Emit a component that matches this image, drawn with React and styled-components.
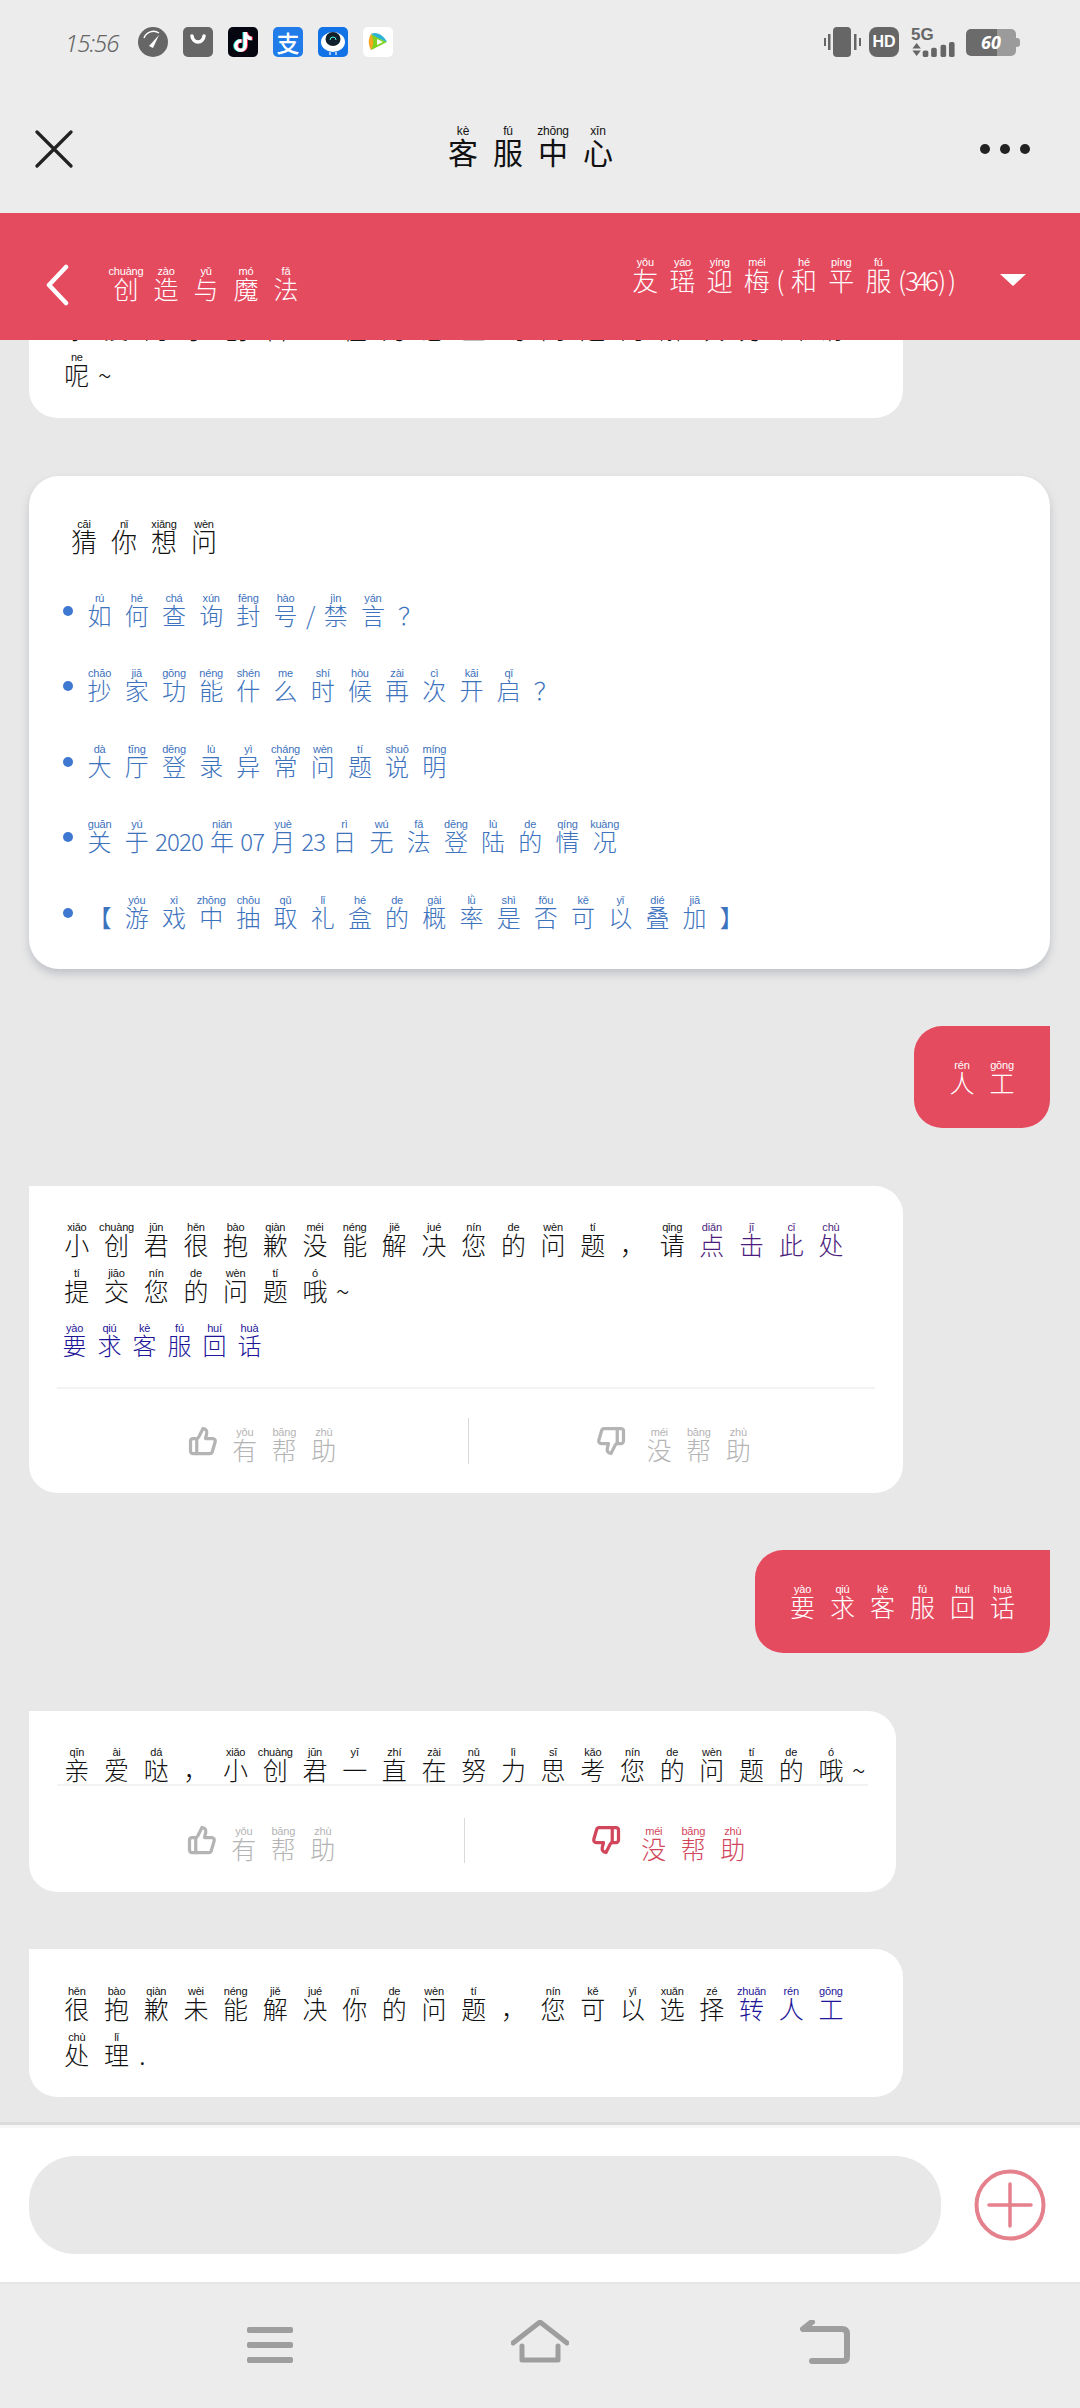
import React from 'react';
import styled, { createGlobalStyle } from 'styled-components';
import { FaTiktok } from 'react-icons/fa6';
import { ThumbsUp, ThumbsDown } from 'lucide-react';

const Global = createGlobalStyle`
  html, body { margin: 0; padding: 0; background: #e8e8e8; }
  * { box-sizing: border-box; }
  body { font-family: "Noto Sans CJK SC", "Noto Sans", sans-serif; }
`;

const RED = '#e54b5f';

const Page = styled.div`
  width: 1080px; height: 2408px; display: flex; flex-direction: column; overflow: hidden;
  background: #e8e8e8; color: #222;
`;
const Top = styled.header`background: #ececec; height: 213px; flex: none; display: flex; flex-direction: column;`;
const StatusBar = styled.div`
  height: 84px; display: flex; align-items: center; padding: 0 64px 0 65px; color: #666;
`;
const Time = styled.span`
  width: 73px; font: italic 300 24px "Noto Sans", sans-serif; letter-spacing: -1px; color: #666;
`;
const AppIcons = styled.div`display: flex; gap: 15px; flex: 1;`;
const Tile = styled.div`
  width: 30px; height: 30px; border-radius: 5px; background: ${p => p.$bg};
  display: flex; align-items: center; justify-content: center; color: #fff; overflow: hidden;
`;
const TikTok = styled(FaTiktok)`
  width: 18px; height: 20px; color: #fff;
  filter: drop-shadow(1px 0 0 #fe2c55) drop-shadow(-1px 0 0 #25f4ee);
`;
const AlipayChar = styled.span`font: 500 23px/30px "Noto Sans CJK SC", sans-serif; color: #fff;`;
const SysIcons = styled.div`display: flex; align-items: center;`;
const HdBadge = styled.div`
  width: 30px; height: 30px; border-radius: 8px; background: #666; color: #fff; margin: 0 12px 0 8px;
  font: 700 16px/30px "Liberation Sans", sans-serif; text-align: center;
`;
const NetBlock = styled.div`width: 45px; height: 30px; display: flex; flex-direction: column; margin-right: 10px;`;
const FiveG = styled.span`font: 700 17px/15px "Liberation Sans", sans-serif; color: #666;`;
const Battery = styled.div`
  position: relative; width: 50px; height: 27px; border-radius: 5px;
  background: linear-gradient(90deg, #6b6b6b 0 62%, #9b9b9b 62% 100%);
  font: italic 700 18px/27px "Noto Sans", sans-serif; color: #fff; text-align: center;
  &::after { content: ''; position: absolute; right: -4px; top: 9px; width: 4px; height: 9px; border-radius: 0 3px 3px 0; background: #9b9b9b; }
`;
const TitleBar = styled.div`flex: 1; display: flex; align-items: center; justify-content: space-between; padding: 0 50px 0 35px;`;
const TitleSlot = styled.div`width: 50px; display: flex; justify-content: ${p => p.$end ? 'flex-end' : 'flex-start'};`;
const TitleText = styled.h1`margin: 0 4px 0 0; font-weight: 400; color: #111;`;
const Dots = styled.div`
  display: flex; gap: 10px;
  span { width: 10px; height: 10px; border-radius: 50%; background: #222; }
`;
const RedBar = styled.div`
  height: 127px; flex: none; background: ${RED}; color: #fff; display: flex; align-items: center;
  justify-content: space-between; padding: 0 54px 0 45px;
`;
const RedLeft = styled.div`display: flex; align-items: center; gap: 37px; padding-top: 17px;`;
const RedRight = styled.div`display: flex; align-items: center; gap: 43px; padding-bottom: 2px;`;
const Caret = styled.div`
  width: 0; height: 0; border-left: 13px solid transparent; border-right: 13px solid transparent;
  border-top: 12px solid #fff; margin-top: 8px;
`;

const Messages = styled.main`
  flex: 1; min-height: 0; overflow: hidden; display: flex; flex-direction: column; padding: 0 30px 0 29px;
`;
const Bubble = styled.div`
  flex: none; width: ${p => p.$w || 874}px; margin-top: ${p => p.$mt}px; background: #fff;
  border-radius: ${p => p.$first ? '28px' : '0 28px 28px 28px'};
  padding: ${p => p.$pt}px 28px ${p => p.$pb}px;
`;
const Body = styled.div`color: #111;`;
const LinkLine = styled.div`margin-top: 9px; color: #1d1699;`;
const Purple = styled.span`color: #4c1d7d;`;
const Navy = styled.span`color: #1d1699;`;
const HRule = styled.div`height: 2px; background: #f3f3f3; margin-top: ${p => p.$mt}px;`;
const Feedback = styled.div`display: flex; align-items: center; height: ${p => p.$h}px; padding-top: ${p => p.$pt}px; padding-bottom: 29px;`;
const FbButton = styled.div`
  flex: 1; display: flex; align-items: center; gap: ${p => p.$gap}px; padding-left: ${p => p.$pl}px;
  color: ${p => p.$active ? '#d2465c' : '#b4b4b4'};
`;
const FbLabel = styled.span`margin-top: 6px;`;
const FbSep = styled.div`width: 1px; height: ${p => p.$h}px; background: #d9d9d9; flex: none;`;

const Card = styled.section`
  flex: none; width: 1021px; margin-top: 58px; background: #fff; border-radius: 30px;
  padding: 43px 35px 40px; box-shadow: 0 5px 8px rgba(120, 125, 140, .35);
`;
const CardHead = styled.div`color: #111;`;
const QList = styled.ul`list-style: none; margin: 36px 0 0; padding: 0; display: flex; flex-direction: column; gap: 41.4px;`;
const QItem = styled.li`display: flex; align-items: flex-start; gap: 8px; height: 34px; margin-left: -1px; color: #3d72bd;`;
const QDot = styled.span`width: 10px; height: 10px; flex: none; border-radius: 50%; background: #3f78d0; margin-top: 13px;`;

const Mine = styled.div`
  flex: none; align-self: flex-end; display: flex; align-items: center; justify-content: center;
  width: ${p => p.$w}px; height: ${p => p.$h}px; margin-top: ${p => p.$mt}px; background: ${RED}; color: #fff;
  border-radius: 28px 0 28px 28px; padding-top: 4px;
`;

const Composer = styled.div`
  height: 157px; flex: none; background: #fff; border-top: 3px solid #f7f7f7; display: flex; align-items: center;
  padding: 0 34px 0 29px; justify-content: space-between; box-shadow: 0 -3px 0 #dcdcdc;
`;
const Input = styled.div`width: 912px; height: 98px; border-radius: 46px; background: #e8e8e8;`;
const Nav = styled.nav`
  height: 126px; flex: none; background: #ececec; border-top: 2px solid #e6e6e6; display: flex; align-items: flex-start;
  padding: 36px 0 0 247px; color: #9e9e9e;
`;
const NavIcon = styled.svg`margin-right: ${p => p.$mr || 0}px; flex: none;`;

/* pinyin run */
const CellBox = styled.span`
  display: inline-flex; flex-direction: column; align-items: center; vertical-align: top;
  width: ${p => p.$w}px; height: ${p => p.$h}px;
`;
const Pin = styled.span`
  height: ${p => p.$rt}px; font: 400 ${p => p.$ps}px/${p => p.$rt}px "Liberation Sans", sans-serif;
  letter-spacing: -0.2px; white-space: nowrap;
`;
const Han = styled.span`
  font-family: "Noto Sans CJK SC", sans-serif; font-size: ${p => p.$size}px; line-height: ${p => p.$lh}px;
  font-weight: ${p => p.$fw}; white-space: nowrap;
`;

function Py({ text, py = '', size = 25, adv = 39.7, rt = 10, lh = 24, pitch = 46, ps = 11, fw = 300, narrow = 12 }) {
  const tones = py.split(' ').filter(Boolean);
  let k = 0;
  const cells = Array.from(text).map((c, i) => {
    const isHan = /\p{Script=Han}/u.test(c);
    const isWide = /[，？【】]/.test(c);
    let w = adv;
    if (!isHan && !isWide) w = c === '~' ? 16 : narrow;
    const pin = isHan ? (tones[k++] || '') : '';
    return (
      <CellBox key={i} $w={w} $h={pitch}>
        <Pin $rt={rt} $ps={ps}>{pin}</Pin>
        <Han $size={size} $lh={lh} $fw={fw}>{c}</Han>
      </CellBox>
    );
  });
  return <>{cells}</>;
}

const Gauge = () => (
  <svg width="30" height="30" viewBox="0 0 30 30">
    <circle cx="15" cy="15" r="15" fill="#666" />
    <path d="M6 11a10 10 0 0 1 15-5" stroke="#fff" strokeWidth="1.4" fill="none" />
    <path d="M11 19 L21 8 L15 21 Z" fill="#fff" />
  </svg>
);
const Bag = () => (
  <Tile $bg="#666">
    <svg width="30" height="30" viewBox="0 0 30 30"><path d="M9 9c1 8 11 8 12 0" stroke="#fff" strokeWidth="3.5" fill="none" strokeLinecap="round" /></svg>
  </Tile>
);
const Bot = () => (
  <Tile $bg="#1273e6">
    <svg width="30" height="30" viewBox="0 0 30 30">
      <ellipse cx="15" cy="15" rx="12" ry="10" fill="#fff" />
      <ellipse cx="15" cy="12" rx="7.5" ry="7" fill="#10202c" />
      <path d="M12 13a3 3 0 0 1 6 0" stroke="#5fd" strokeWidth="1" fill="none" />
      <path d="M12 25v3M18 25v3" stroke="#cfe6ff" strokeWidth="1.5" />
    </svg>
  </Tile>
);
const Play = () => (
  <Tile $bg="#fff">
    <svg width="30" height="30" viewBox="0 0 30 30">
      <path d="M8 7 C5 12 5 18 8 23 L15 19 V11 Z" fill="#f5a623" />
      <path d="M8 7 L24 15 L8 23 C11 18 11 12 8 7 Z" fill="#7ed321" />
      <path d="M8 7 C14 4 21 9 24 15 L15 11 Z" fill="#2bb3d6" />
      <path d="M14 12 L20 15 L14 18 Z" fill="#fff" />
    </svg>
  </Tile>
);
const Vibrate = () => (
  <svg width="37" height="30" viewBox="0 0 37 30" fill="#666">
    <rect x="9" y="0" width="18" height="30" rx="4" />
    <rect x="0" y="11" width="2" height="8" />
    <rect x="4" y="7" width="2.5" height="16" />
    <rect x="30" y="7" width="2.5" height="16" />
    <rect x="35" y="11" width="2" height="8" />
  </svg>
);
const Signal = () => (
  <svg width="45" height="16" viewBox="0 0 45 16" fill="#666">
    <path d="M0 7 L4.5 1 L9 7 Z M0 9 L9 9 L4.5 15 Z" />
    <rect x="11" y="9" width="6" height="7" rx="2" />
    <rect x="20" y="6" width="6" height="10" rx="2" />
    <rect x="30" y="3" width="6" height="13" rx="2" />
    <rect x="39" y="0" width="6" height="16" rx="2" />
  </svg>
);

const thumbProps = { size: 30, strokeWidth: 2.6 };

function FeedbackRow({ sep, pt, upPl, downPl, downGap, downActive }) {
  return (
    <Feedback $pt={pt} $h={pt + sep + 29}>
      <FbButton $pl={upPl} $gap={7}>
        <ThumbsUp {...thumbProps} />
        <FbLabel><Py text="有帮助" py="yǒu bāng zhù" adv={39.5} pitch={34} /></FbLabel>
      </FbButton>
      <FbSep $h={sep} />
      <FbButton $pl={downPl} $gap={downGap} $active={downActive}>
        <ThumbsDown {...thumbProps} />
        <FbLabel><Py text="没帮助" py="méi bāng zhù" adv={39.5} pitch={34} /></FbLabel>
      </FbButton>
    </Feedback>
  );
}

export default function App() {
  const q = { size: 24, adv: 37.2, pitch: 34 };
  return (
    <Page>
      <Global />
      <Top>
        <StatusBar>
          <Time>15:56</Time>
          <AppIcons>
            <Gauge />
            <Bag />
            <Tile $bg="#05060f"><TikTok /></Tile>
            <Tile $bg="#1f7ce8"><AlipayChar>支</AlipayChar></Tile>
            <Bot />
            <Play />
          </AppIcons>
          <SysIcons>
            <Vibrate />
            <HdBadge>HD</HdBadge>
            <NetBlock>
              <FiveG>5G</FiveG>
              <Signal />
            </NetBlock>
            <Battery>60</Battery>
          </SysIcons>
        </StatusBar>
        <TitleBar>
          <TitleSlot>
            <svg width="38" height="38" viewBox="0 0 38 38"><path d="M2 2 L36 36 M36 2 L2 36" stroke="#222" strokeWidth="3.2" strokeLinecap="round" /></svg>
          </TitleSlot>
          <TitleText>
            <Py text="客服中心" py="kè fú zhōng xīn" size={30} adv={45} lh={30} pitch={46} ps={12} fw={400} />
          </TitleText>
          <TitleSlot $end><Dots><span /><span /><span /></Dots></TitleSlot>
        </TitleBar>
      </Top>
      <RedBar>
        <RedLeft>
          <svg width="24" height="42" viewBox="0 0 24 42"><path d="M21 3 L4 21 L21 39" stroke="#fff" strokeWidth="4.5" fill="none" strokeLinecap="round" strokeLinejoin="round" /></svg>
          <span><Py text="创造与魔法" py="chuàng zào yǔ mó fǎ" adv={40} pitch={38} /></span>
        </RedLeft>
        <RedRight>
          <span><Py text="友瑶迎梅(和平服(346))" py="yǒu yáo yíng méi hé píng fú" size={26} adv={37.2} rt={8} lh={28} pitch={36} narrow={10} /></span>
          <Caret />
        </RedRight>
      </RedBar>
      <Messages>
        <Bubble $first $mt={-70} $pt={36} $pb={20}>
          <Body>
            <Py text="亲爱的小创君正在为您查询问题的解决方法请" />
            <Py text="呢~" py="ne" />
          </Body>
        </Bubble>
        <Card>
          <CardHead>
            <Py text="猜你想问" py="cāi nǐ xiǎng wèn" size={26} adv={40} pitch={38} />
          </CardHead>
          <QList>
            <QItem><QDot /><span><Py text="如何查询封号/禁言？" py="rú hé chá xún fēng hào jìn yán" {...q} narrow={13} /></span></QItem>
            <QItem><QDot /><span><Py text="抄家功能什么时候再次开启？" py="chāo jiā gōng néng shén me shí hòu zài cì kāi qǐ" {...q} /></span></QItem>
            <QItem><QDot /><span><Py text="大厅登录异常问题说明" py="dà tīng dēng lù yì cháng wèn tí shuō míng" {...q} /></span></QItem>
            <QItem><QDot /><span><Py text="关于2020年07月23日无法登陆的情况" py="guān yú nián yuè rì wú fǎ dēng lù de qíng kuàng" {...q} /></span></QItem>
            <QItem><QDot /><span><Py text="【游戏中抽取礼盒的概率是否可以叠加】" py="yóu xì zhōng chōu qǔ lǐ hé de gài lǜ shì fǒu kě yǐ dié jiā" {...q} /></span></QItem>
          </QList>
        </Card>
        <Mine $w={136} $h={102} $mt={57}>
          <Py text="人工" py="rén gōng" adv={40} pitch={38} />
        </Mine>
        <Bubble $mt={58} $pt={36} $pb={0}>
          <Body>
            <Py text="小创君很抱歉没能解决您的问题，请" py="xiǎo chuàng jūn hěn bào qiàn méi néng jiě jué nín de wèn tí qǐng" />
            <Purple><Py text="点击此处" py="diǎn jī cǐ chù" /></Purple>
            <Py text="提交您的问题哦~" py="tí jiāo nín de wèn tí ó" />
          </Body>
          <LinkLine><Py text="要求客服回话" py="yào qiú kè fú huí huà" size={24} adv={35} pitch={36} /></LinkLine>
          <HRule $mt={28} />
          <FeedbackRow sep={46} pt={29} upPl={131} downPl={127} downGap={14} />
        </Bubble>
        <Mine $w={295} $h={103} $mt={57}>
          <Py text="要求客服回话" py="yào qiú kè fú huí huà" adv={40} pitch={38} />
        </Mine>
        <Bubble $w={867} $mt={58} $pt={36} $pb={0}>
          <Body>
            <Py text="亲爱哒，小创君一直在努力思考您的问题的哦~" py="qīn ài dá xiǎo chuàng jūn yī zhí zài nǔ lì sī kǎo nín de wèn tí de ó" pitch={37} />
          </Body>
          <HRule $mt={0} />
          <FeedbackRow sep={45} pt={32} upPl={130} downPl={126} downGap={13} downActive />
        </Bubble>
        <Bubble $mt={57} $pt={37} $pb={19}>
          <Body>
            <Py text="很抱歉未能解决你的问题，您可以选择" py="hěn bào qiàn wèi néng jiě jué nǐ de wèn tí nín kě yǐ xuǎn zé" />
            <Navy><Py text="转人工" py="zhuǎn rén gōng" /></Navy>
            <Py text="处理." py="chù lǐ" />
          </Body>
        </Bubble>
      </Messages>
      <Composer>
        <Input />
        <svg width="72" height="72" viewBox="0 0 72 72" fill="none" stroke="#e5808d">
          <circle cx="36" cy="36" r="33.5" strokeWidth="4" />
          <path d="M15 36H57M36 15V57" strokeWidth="3.5" strokeLinecap="round" />
        </svg>
      </Composer>
      <Nav>
        <NavIcon $mr={218} width="46" height="44" viewBox="0 0 46 44" fill="currentColor">
          <rect y="7" width="46" height="6" rx="2" />
          <rect y="22" width="46" height="6" rx="2" />
          <rect y="37" width="46" height="6" rx="2" />
        </NavIcon>
        <NavIcon $mr={231} width="58" height="44" viewBox="0 0 58 44" fill="none" stroke="currentColor" strokeWidth="5" strokeLinecap="round" strokeLinejoin="round">
          <path d="M2 23 L29 2 L56 23" />
          <path d="M11 26V40H47V26" />
        </NavIcon>
        <NavIcon width="50" height="44" viewBox="0 0 50 44" fill="none" stroke="currentColor" strokeWidth="6" strokeLinecap="round" strokeLinejoin="round">
          <path d="M4 9 H42 Q47 9 47 14 V37 Q47 41 43 41 H12" />
          <path d="M12 2 L3 9" />
        </NavIcon>
      </Nav>
    </Page>
  );
}
